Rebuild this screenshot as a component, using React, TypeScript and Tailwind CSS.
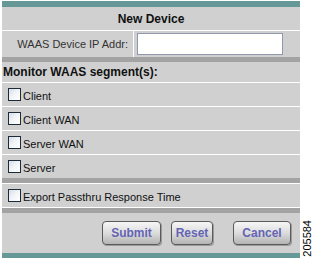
import React from "react";

const segments = ["Client", "Client WAN", "Server WAN", "Server"];

const Check: React.FC = () => (
  <span className="inline-block w-[13px] h-[13px] border border-[#1c2a3a] bg-gradient-to-br from-[#d8dee6] via-[#f2f5f8] to-white shrink-0" />
);

const Btn: React.FC<{ label: string; className: string }> = ({ label, className }) => (
  <button
    className={`${className} h-[24px] rounded-[4px] border border-[#5a5a5a] bg-gradient-to-b from-[#f6f6f6] via-[#dcdcdc] to-[#b4b4b4] text-[12px] font-bold text-[#6464b4] shadow-[1px_1px_0_#9a9a9a]`}
  >
    {label}
  </button>
);

export default function App() {
  return (
    <div className="w-[314px] h-[261px] bg-white flex font-['Liberation_Sans',Arial,sans-serif] text-[11px] text-[#111]">
      <div className="ml-[2px] mt-[1px] w-[298px] flex flex-col">
        <div className="h-[6px] bg-[#659896]" />
        <div className="h-[23px] bg-[#d0d0d0] flex items-center justify-center font-bold text-[12px]">
          New Device
        </div>
        <div className="h-px bg-white" />
        <div className="h-[26px] flex">
          <div className="w-[131px] bg-[#d0d0d0] flex items-center justify-end pr-[5px] text-[#333]">
            WAAS Device IP Addr:
          </div>
          <div className="w-px bg-white" />
          <div className="flex-1 bg-[#d0d0d0] flex items-center pl-[3px]">
            <input className="w-[146px] h-[22px] bg-white border border-[#8f99ad] outline-none" />
          </div>
        </div>
        <div className="h-[5px] bg-[#a3a3a3]" />
        <div className="h-[20px] bg-[#d0d0d0] flex items-center pl-[1px] font-bold text-[12px]">
          Monitor WAAS segment(s):
        </div>
        {segments.map((s) => (
          <React.Fragment key={s}>
            <div className="h-px bg-white" />
            <div className="h-[23px] bg-[#d0d0d0] flex items-center pl-[6px] gap-[2px]">
              <Check />
              <span className="mt-[3px]">{s}</span>
            </div>
          </React.Fragment>
        ))}
        <div className="h-[5px] bg-[#a3a3a3]" />
        <div className="h-px bg-white" />
        <div className="h-[23px] bg-[#d0d0d0] flex items-center pl-[6px] gap-[2px]">
          <Check />
          <span className="mt-[3px]">Export Passthru Response Time</span>
        </div>
        <div className="h-px bg-white" />
        <div className="h-[5px] bg-[#a3a3a3]" />
        <div className="h-[40px] bg-[#d0d0d0] flex items-center justify-end pr-[9px]">
          <Btn label="Submit" className="w-[59px]" />
          <Btn label="Reset" className="w-[42px] ml-[10px]" />
          <Btn label="Cancel" className="w-[58px] ml-[20px]" />
        </div>
        <div className="h-[5px] bg-[#659896]" />
      </div>
      <div className="flex-1 flex items-end justify-end pb-[4px] pr-[1px]">
        <span className="[writing-mode:vertical-rl] rotate-180 text-[11px] leading-none text-black">205584</span>
      </div>
    </div>
  );
}
